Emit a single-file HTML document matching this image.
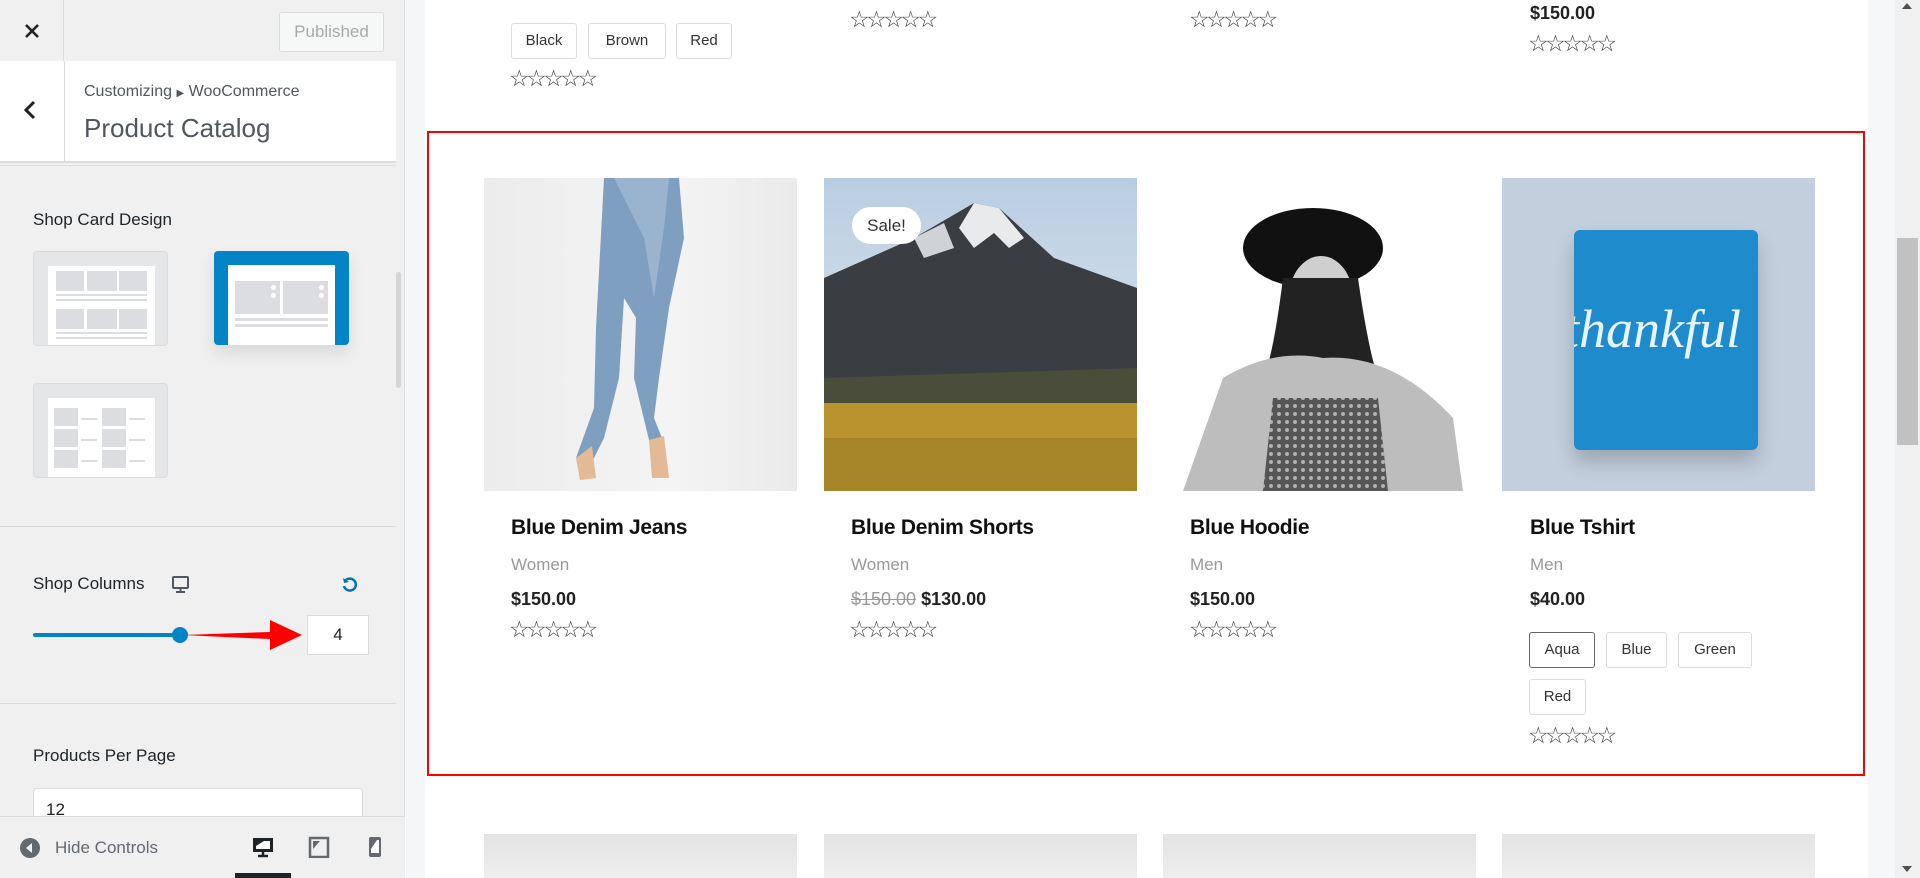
<!DOCTYPE html>
<html><head><meta charset="utf-8"><style>
*{box-sizing:border-box;margin:0;padding:0}
body{width:1920px;height:878px;overflow:hidden;position:relative;font-family:"Liberation Sans",sans-serif;background:#fff}
.a{position:absolute}
#side{left:0;top:0;width:405px;height:878px;background:#f0f0f1;border-right:1px solid #dcdcde}
.line{position:absolute;left:0;width:396px;height:1px;background:#dcdcde}
.lbl{position:absolute;left:33px;font-size:17px;color:#1d2327}
.thumb{position:absolute;width:135px;height:95px;border:1px solid #dcdcde;border-radius:4px;background:#e5e6e8;overflow:hidden}
.thumb .in{position:absolute;left:14px;top:14px;width:107px;height:90px;background:#fff}
.g{position:absolute;background:#dcdde0}
.sw{position:absolute;height:36px;border:1px solid #ddd;border-radius:3px;font-size:15px;color:#333;line-height:34px;text-align:center}
.stars{position:absolute;font-family:"DejaVu Sans",sans-serif;font-size:23px;color:#444;letter-spacing:-3.5px;line-height:1}
.t{position:absolute;font-size:21px;font-weight:bold;color:#111;letter-spacing:-0.3px}
.c{position:absolute;font-size:17px;color:#999}
.p{position:absolute;font-size:18px;font-weight:bold;color:#222}
.img{position:absolute;top:178px;width:313px;height:313px;overflow:hidden}
</style></head><body>
<div id="side" class="a">
 <svg class="a" style="left:24px;top:23px" width="16" height="16"><path d="M2 2L14 14M14 2L2 14" stroke="#1d2327" stroke-width="2.6"/></svg>
 <div class="a" style="left:63px;top:0;width:1px;height:61px;background:#dcdcde"></div>
 <div class="a" style="left:279px;top:12px;width:105px;height:40px;border:1px solid #dcdcde;border-radius:3px;background:#f6f7f7;color:#a7aaad;font-size:17px;text-align:center;line-height:38px">Published</div>
 <div class="a" style="left:0;top:61px;width:396px;height:100px;background:#fff"></div>
 <div class="a" style="left:64px;top:61px;width:1px;height:100px;background:#dcdcde"></div>
 <svg class="a" style="left:22px;top:99px" width="16" height="22"><path d="M12 3 L4 11 L12 19" stroke="#1d2327" stroke-width="3" fill="none"/></svg>
 <div class="a" style="left:84px;top:83px;font-size:16px;color:#50575e">Customizing <span style="font-size:10px">&#9654;</span> WooCommerce</div>
 <div class="a" style="left:84px;top:113px;font-size:26px;color:#50575e">Product Catalog</div>
 <div class="line" style="top:161px;height:2px"></div>
 <div class="line" style="top:165px"></div>
 <div class="lbl" style="top:210px">Shop Card Design</div>
 <div class="thumb" style="left:33px;top:251px"><div class="in">
  <div class="g" style="left:8px;top:5px;width:28px;height:20px"></div><div class="g" style="left:39px;top:5px;width:30px;height:20px"></div><div class="g" style="left:71px;top:5px;width:28px;height:20px"></div>
  <div class="g" style="left:8px;top:28px;width:91px;height:2px"></div><div class="g" style="left:8px;top:33px;width:91px;height:2px"></div>
  <div class="g" style="left:8px;top:43px;width:28px;height:20px"></div><div class="g" style="left:39px;top:43px;width:30px;height:20px"></div><div class="g" style="left:71px;top:43px;width:28px;height:20px"></div>
  <div class="g" style="left:8px;top:66px;width:91px;height:2px"></div><div class="g" style="left:8px;top:71px;width:91px;height:2px"></div></div></div>
 <div class="a" style="left:214px;top:251px;width:135px;height:94px;background:#0284c7;border-radius:4px;box-shadow:0 8px 16px rgba(0,0,0,.1);overflow:hidden">
  <div class="a" style="left:14px;top:14px;width:107px;height:90px;background:#fff">
   <div class="g" style="left:7px;top:16px;width:45px;height:33px"></div><div class="g" style="left:55px;top:16px;width:45px;height:33px"></div>
   <div class="a" style="left:43px;top:20px;width:5px;height:5px;border-radius:50%;background:#fff"></div><div class="a" style="left:43px;top:28px;width:5px;height:5px;border-radius:50%;background:#fff"></div>
   <div class="a" style="left:91px;top:20px;width:5px;height:5px;border-radius:50%;background:#fff"></div><div class="a" style="left:91px;top:28px;width:5px;height:5px;border-radius:50%;background:#fff"></div>
   <div class="g" style="left:7px;top:53px;width:93px;height:3px"></div><div class="g" style="left:7px;top:59px;width:93px;height:3px"></div>
  </div></div>
 <div class="thumb" style="left:33px;top:383px"><div class="in">
  <div class="g" style="left:6px;top:10px;width:24px;height:18px"></div><div class="g" style="left:54px;top:10px;width:24px;height:18px"></div>
  <div class="g" style="left:6px;top:31px;width:24px;height:18px"></div><div class="g" style="left:54px;top:31px;width:24px;height:18px"></div>
  <div class="g" style="left:6px;top:52px;width:24px;height:18px"></div><div class="g" style="left:54px;top:52px;width:24px;height:18px"></div>
  <div class="g" style="left:33px;top:20px;width:16px;height:2px"></div><div class="g" style="left:81px;top:20px;width:16px;height:2px"></div>
  <div class="g" style="left:33px;top:41px;width:16px;height:2px"></div><div class="g" style="left:81px;top:41px;width:16px;height:2px"></div>
  <div class="g" style="left:33px;top:62px;width:16px;height:2px"></div><div class="g" style="left:81px;top:62px;width:16px;height:2px"></div></div></div>
 <div class="a" style="left:396px;top:272px;width:5px;height:116px;border-radius:3px;background:#d5d5d7"></div>
 <div class="line" style="top:526px"></div>
 <div class="lbl" style="top:574px">Shop Columns</div>
 <svg class="a" style="left:171px;top:576px" width="20" height="18"><rect x="2" y="1" width="15" height="11" rx="1" stroke="#50575e" stroke-width="2" fill="none"/><path d="M9.5 12v3M5 16h9" stroke="#50575e" stroke-width="2"/></svg>
 <svg class="a" style="left:341px;top:576px" width="18" height="18"><path d="M4 5 A6 6 0 1 1 3 10" stroke="#0273b0" stroke-width="2.5" fill="none"/><path d="M2 2 L3 7 L8 6Z" fill="#0273b0"/></svg>
 <div class="a" style="left:33px;top:633px;width:148px;height:4px;border-radius:2px;background:#0284c7"></div>
 <div class="a" style="left:172px;top:627px;width:16px;height:16px;border-radius:50%;background:#0284c7"></div>
 <svg class="a" style="left:180px;top:615px" width="125" height="40"><path d="M2 20 L90 17 L90 5 L122 20 L90 35 L90 24 Z" fill="#f00"/></svg>
 <div class="a" style="left:307px;top:615px;width:62px;height:40px;background:#fff;border:1px solid #dcdcde;font-size:17px;color:#222;text-align:center;line-height:38px">4</div>
 <div class="line" style="top:703px"></div>
 <div class="lbl" style="top:746px">Products Per Page</div>
 <div class="a" style="left:33px;top:788px;width:330px;height:40px;background:#fff;border:1px solid #dcdcde;border-radius:4px;font-size:17px;color:#222;padding:11px 12px">12</div>
 <div class="a" style="left:0;top:816px;width:405px;height:62px;background:#f0f0f1;border-top:1px solid #dcdcde"></div>
 <svg class="a" style="left:19px;top:837px" width="22" height="22"><circle cx="11" cy="11" r="10" fill="#646970"/><path d="M13 6 L7 11 L13 16Z" fill="#f0f0f1"/></svg>
 <div class="a" style="left:55px;top:838px;font-size:17px;color:#646970">Hide Controls</div>
 <svg class="a" style="left:251px;top:836px" width="24" height="22"><rect x="2" y="2" width="20" height="14" fill="#1d2327"/><rect x="5" y="5" width="14" height="8" fill="#fff"/><path d="M5 5h8l-8 5z" fill="#1d2327"/><path d="M12 16v3M7 20h10" stroke="#1d2327" stroke-width="2.5"/></svg>
 <svg class="a" style="left:308px;top:836px" width="22" height="22"><rect x="2" y="2" width="18" height="19" fill="none" stroke="#646970" stroke-width="2.5"/><path d="M5 5h7l-7 8z" fill="#646970"/></svg>
 <svg class="a" style="left:366px;top:836px" width="18" height="22"><rect x="3" y="1" width="12" height="20" rx="2" fill="#646970"/><rect x="5" y="4" width="8" height="13" fill="#fff"/><path d="M5 4h6l-6 9z" fill="#646970"/></svg>
 <div class="a" style="left:235px;top:873px;width:56px;height:5px;background:#1d2327"></div>
</div>
<div class="a" style="left:406px;top:0;width:19px;height:878px;background:#f5f6f8"></div>
<div class="a" style="left:1868px;top:0;width:27px;height:878px;background:#f6f7f9"></div>
<div class="a" style="left:1895px;top:0;width:25px;height:878px;background:#f0f0f0"></div>
<div class="a" style="left:1897px;top:238px;width:21px;height:207px;background:#c1c1c1"></div>
<div class="a" style="left:1902px;top:3px;border:5px solid transparent;border-bottom:6px solid #505050;border-top:0"></div>
<div class="a" style="left:1902px;top:866px;border:5px solid transparent;border-top:6px solid #505050;border-bottom:0"></div>
<div class="sw" style="left:511px;top:23px;width:66px">Black</div>
<div class="sw" style="left:588px;top:23px;width:78px">Brown</div>
<div class="sw" style="left:676px;top:23px;width:56px">Red</div>
<div class="stars" style="left:509px;top:68px">☆☆☆☆☆</div>
<div class="stars" style="left:849px;top:9px">☆☆☆☆☆</div>
<div class="stars" style="left:1189px;top:9px">☆☆☆☆☆</div>
<div class="p" style="left:1530px;top:3px">$150.00</div>
<div class="stars" style="left:1528px;top:33px">☆☆☆☆☆</div>
<div class="a" style="left:427px;top:131px;width:1438px;height:645px;border:2.5px solid #f00"></div>
<div class="img" style="left:484px;background:linear-gradient(90deg,#ececec,#f4f4f4 60%,#eaeaea)">
 <svg width="313" height="313"><path d="M120 0 L195 0 L200 60 L185 130 L175 200 L170 240 L178 260 L165 262 L150 200 L152 140 L140 120 L135 200 L120 260 L105 290 L92 280 L110 230 L112 150 Z" fill="#7f9fc0"/><path d="M130 0 L185 0 L180 50 L170 120 L160 60Z" fill="#9ab3cf"/><path d="M92 280 L108 268 L112 300 L96 302Z" fill="#e4b996"/><path d="M165 262 L180 258 L185 300 L168 300Z" fill="#e4b996"/></svg>
</div>
<div class="img" style="left:824px;background:linear-gradient(#b9cde2 0%,#c8d7e6 30%)">
 <svg width="313" height="313"><path d="M0 100 L90 60 L150 25 L175 30 L230 80 L313 110 L313 230 L0 230Z" fill="#3a3d42"/><path d="M150 25 L175 30 L200 60 L185 70 L170 55 L150 70 L135 50Z" fill="#e8eaec"/><path d="M90 60 L120 45 L130 70 L100 80Z" fill="#cfd3d8"/><path d="M0 200 L313 190 L313 230 L0 230Z" fill="#4a4d3a"/><rect y="225" width="313" height="88" fill="#b8932e"/><rect y="260" width="313" height="53" fill="#9a7a25" opacity=".6"/></svg>
 <div class="a" style="left:28px;top:29px;width:69px;height:37px;border-radius:19px;background:#fff;font-size:17px;color:#333;text-align:center;line-height:37px">Sale!</div>
</div>
<div class="img" style="left:1163px;background:#fff">
 <svg width="313" height="313"><defs><pattern id="pt" width="8" height="8" patternUnits="userSpaceOnUse"><circle cx="4" cy="4" r="2" fill="#eee"/></pattern></defs><ellipse cx="150" cy="70" rx="70" ry="40" fill="#111"/><ellipse cx="158" cy="120" rx="32" ry="42" fill="#cfcfcf"/><path d="M120 100 Q110 180 100 200 L215 200 Q205 170 195 100Z" fill="#222"/><path d="M60 200 Q110 170 160 180 Q230 175 290 240 L300 313 L20 313 Z" fill="#bdbdbd"/><path d="M110 220 L215 220 L225 313 L100 313Z" fill="#555"/><path d="M110 220 L215 220 L225 313 L100 313Z" fill="url(#pt)" opacity=".6"/></svg>
</div>
<div class="img" style="left:1502px;background:#c3cfdd">
 <div class="a" style="left:72px;top:52px;width:184px;height:220px;background:#1e8ccc;border-radius:6px;box-shadow:0 12px 20px rgba(0,0,0,.2)"></div>
 <div class="a" style="left:72px;top:120px;width:184px;overflow:hidden;font-family:'Liberation Serif',serif;font-style:italic;font-size:54px;color:#e8f4fb;white-space:nowrap"><span style="margin-left:-10px">thankful</span></div>
</div>
<div class="t" style="left:511px;top:516px">Blue Denim Jeans</div>
<div class="t" style="left:851px;top:516px">Blue Denim Shorts</div>
<div class="t" style="left:1190px;top:516px">Blue Hoodie</div>
<div class="t" style="left:1530px;top:516px">Blue Tshirt</div>
<div class="c" style="left:511px;top:555px">Women</div>
<div class="c" style="left:851px;top:555px">Women</div>
<div class="c" style="left:1190px;top:555px">Men</div>
<div class="c" style="left:1530px;top:555px">Men</div>
<div class="p" style="left:511px;top:589px">$150.00</div>
<div class="p" style="left:851px;top:589px"><span style="color:#999;font-weight:normal;text-decoration:line-through">$150.00</span> $130.00</div>
<div class="p" style="left:1190px;top:589px">$150.00</div>
<div class="p" style="left:1530px;top:589px">$40.00</div>
<div class="stars" style="left:509px;top:619px">☆☆☆☆☆</div>
<div class="stars" style="left:849px;top:619px">☆☆☆☆☆</div>
<div class="stars" style="left:1189px;top:619px">☆☆☆☆☆</div>
<div class="sw" style="left:1529px;top:632px;width:66px;border-color:#666">Aqua</div>
<div class="sw" style="left:1606px;top:632px;width:61px">Blue</div>
<div class="sw" style="left:1678px;top:632px;width:74px">Green</div>
<div class="sw" style="left:1529px;top:679px;width:57px">Red</div>
<div class="stars" style="left:1528px;top:725px">☆☆☆☆☆</div>
<div class="a" style="left:484px;top:834px;width:313px;height:44px;background:linear-gradient(#e3e3e3,#eeeeee)"></div>
<div class="a" style="left:824px;top:834px;width:313px;height:44px;background:linear-gradient(#e3e3e3,#eeeeee)"></div>
<div class="a" style="left:1163px;top:834px;width:313px;height:44px;background:linear-gradient(#e3e3e3,#eeeeee)"></div>
<div class="a" style="left:1502px;top:834px;width:313px;height:44px;background:linear-gradient(#e3e3e3,#eeeeee)"></div>
</body></html>
